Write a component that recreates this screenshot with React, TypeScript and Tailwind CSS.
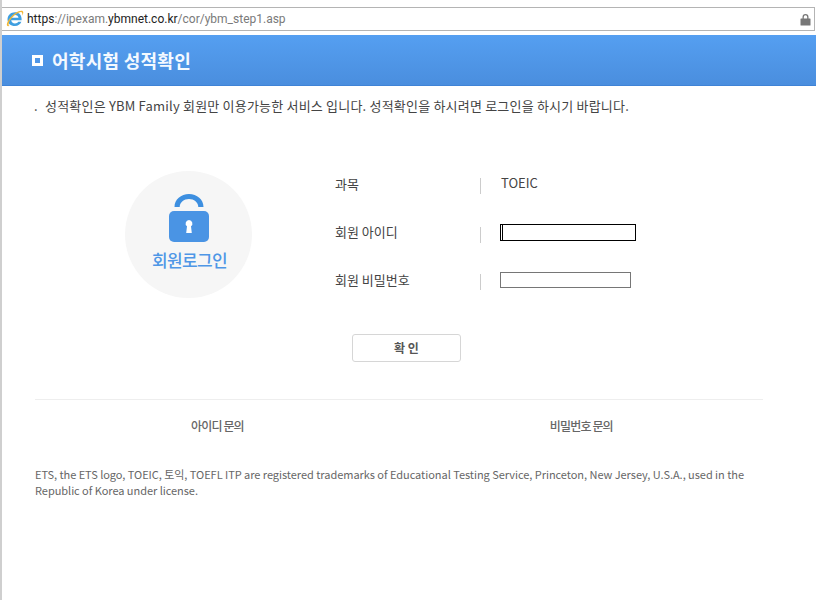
const FONT = "font-['Noto_Sans_CJK_KR','Noto_Sans',sans-serif]";

function IeIcon() {
  return (
    <svg width="18" height="18" viewBox="0 0 18 18" className="shrink-0">
      <path d="M1.500 9.500C1.500 5 5 2.200 9 2.200c3.800 0 6.600 2.700 6.600 6.600v1.400H5.200c.2 2 1.700 3.200 3.800 3.200 1.500 0 2.600-.6 3.300-1.600h3.100c-1 2.700-3.400 4.200-6.400 4.200-4.400 0-7.500-2.700-7.500-6.500z" fill="#3f9fe0" />
      <path d="M5.300 7.800h7.200C12.300 6 11 4.900 9 4.900S5.600 6 5.300 7.800z" fill="#fff" />
      <path d="M1 15.500C.2 13.200 3.500 7.500 8 4c3.500-2.700 7.500-4 8.800-2.800 1 .9.400 2.800-.8 4.600.4-1.600.5-2.800-.2-3.400-1-.8-3.500.2-6.200 2.100C6 7 3 11.300 2.600 14.200c-.1 1 .3 1.500 1.200 1.600-1.200.6-2.400.6-2.800-.3z" fill="#f2b632" />
    </svg>
  );
}

function LockBadge() {
  return (
    <div className="flex h-[127px] w-[127px] shrink-0 flex-col items-center rounded-full bg-[#f6f6f6] pt-[23px]">
      <svg width="40" height="48" viewBox="0 0 40 48">
        <path d="M5.500 13C5.500 5.500 12 0 20 0s14.500 5.500 14.500 13h-5.200C29.300 8.500 25 5 20 5s-9.300 3.500-9.300 8z" fill="#3d8fe0" />
        <rect x="0" y="17" width="40" height="31" rx="5" fill="#4a94e4" />
        <path d="M20 26a3.500 3.500 0 0 1 2 6.300l.8 6.700h-5.600l.8-6.700A3.500 3.500 0 0 1 20 26z" fill="#fff" />
      </svg>
      <span className="mt-[6px] ml-[2px] text-[17px] leading-[24px] font-medium tracking-[-0.6px] text-[#4f97e6]">회원로그인</span>
    </div>
  );
}

function Row({ label, children, sep, top }: { label: string; children: React.ReactNode; sep: string; top: string }) {
  return (
    <div className={`flex h-[24px] items-center ${top}`}>
      <span className="w-[145px] text-[13px] leading-[16px] text-[#444]">{label}</span>
      <span className={`mr-[19px] h-[16px] w-px bg-[#cccccc] ${sep}`} />
      {children}
    </div>
  );
}

export default function App() {
  return (
    <div className={`${FONT} flex h-[600px] w-[817px] flex-col overflow-hidden border-l-2 border-[#cfcfcf] bg-white`}>
      <div className="-ml-px mt-[7px] mr-[2px] flex h-[24px] items-center border border-[#b4b4b4] pr-[3px] pl-[4px]">
        <IeIcon />
        <span className="ml-[3px] flex-1 font-['Roboto',sans-serif] text-[12px] leading-[20px] text-[#7a7a7a]">
          <span className="text-[#222]">https</span>://ipexam.<span className="text-[#222]">ybmnet.co.kr</span>/cor/ybm_step1.asp
        </span>
        <svg width="11" height="13" viewBox="0 0 11 13">
          <path d="M2.500 6V4a3 3 0 0 1 6 0v2H7.200V4a1.700 1.700 0 0 0-3.400 0v2z" fill="#777" />
          <rect x="0.500" y="5.500" width="10" height="7" rx="0.500" fill="#777" />
        </svg>
      </div>

      <div className="mt-[4px] mr-[1px] flex h-[51px] items-center border-b border-[#3f83d6] bg-gradient-to-b from-[#559ff1] to-[#4a8ede] pl-[30px]">
        <span className="h-[11px] w-[11px] border-[3px] border-white" />
        <h1 className="ml-[9px] text-[18px] font-bold tracking-[0.27px] text-[#f4f9ff]">어학시험 성적확인</h1>
      </div>

      <p className="mt-[11px] flex pl-[32px] text-[13px] leading-[17px] tracking-[0.2px] text-[#444]">
        <span className="w-[11px]">.</span>
        성적확인은 YBM Family 회원만 이용가능한 서비스 입니다. 성적확인을 하시려면 로그인을 하시기 바랍니다.
      </p>

      <div className="mt-[57px] flex pl-[123px]">
        <LockBadge />
        <div className="ml-[83px] flex flex-col pt-[1px]">
          <Row label="과목" sep="mt-[4px]" top="">
            <span className="ml-px -mt-[3px] text-[13px] leading-[16px] text-[#444]">TOEIC</span>
          </Row>
          <Row label="회원 아이디" sep="mt-[6px]" top="mt-[24px]">
            <div className="mt-[1px] flex h-[17px] w-[136px] border border-black bg-white pl-[1px]">
              <span className="h-full w-px bg-black" />
            </div>
          </Row>
          <Row label="회원 비밀번호" sep="mt-[4px]" top="mt-[24px]">
            <div className="-mt-[1px] h-[16px] w-[131px] border border-[#767676] bg-white" />
          </Row>
        </div>
      </div>

      <div className="mt-[36px] flex justify-center pr-[6px]">
        <button className="h-[28px] w-[109px] rounded-[3px] border border-[#d6d6d6] bg-white text-[12px] font-bold text-[#555]">확 인</button>
      </div>

      <div className="mt-[37px] ml-[33px] w-[728px] border-t border-[#eeeeee]">
        <div className="flex pt-[17px] text-[12px] leading-[17px] font-medium tracking-[-0.85px] text-[#666]">
          <span className="ml-[156px]">아이디 문의</span>
          <span className="ml-[306px]">비밀번호 문의</span>
        </div>
        <p className="mt-[32px] text-[11px] leading-[16px] tracking-[-0.04px] text-[#666]">
          ETS, the ETS logo, TOEIC, 토익, TOEFL ITP are registered trademarks of Educational Testing Service, Princeton, New Jersey, U.S.A., used in the Republic of Korea under license.
        </p>
      </div>
    </div>
  );
}
